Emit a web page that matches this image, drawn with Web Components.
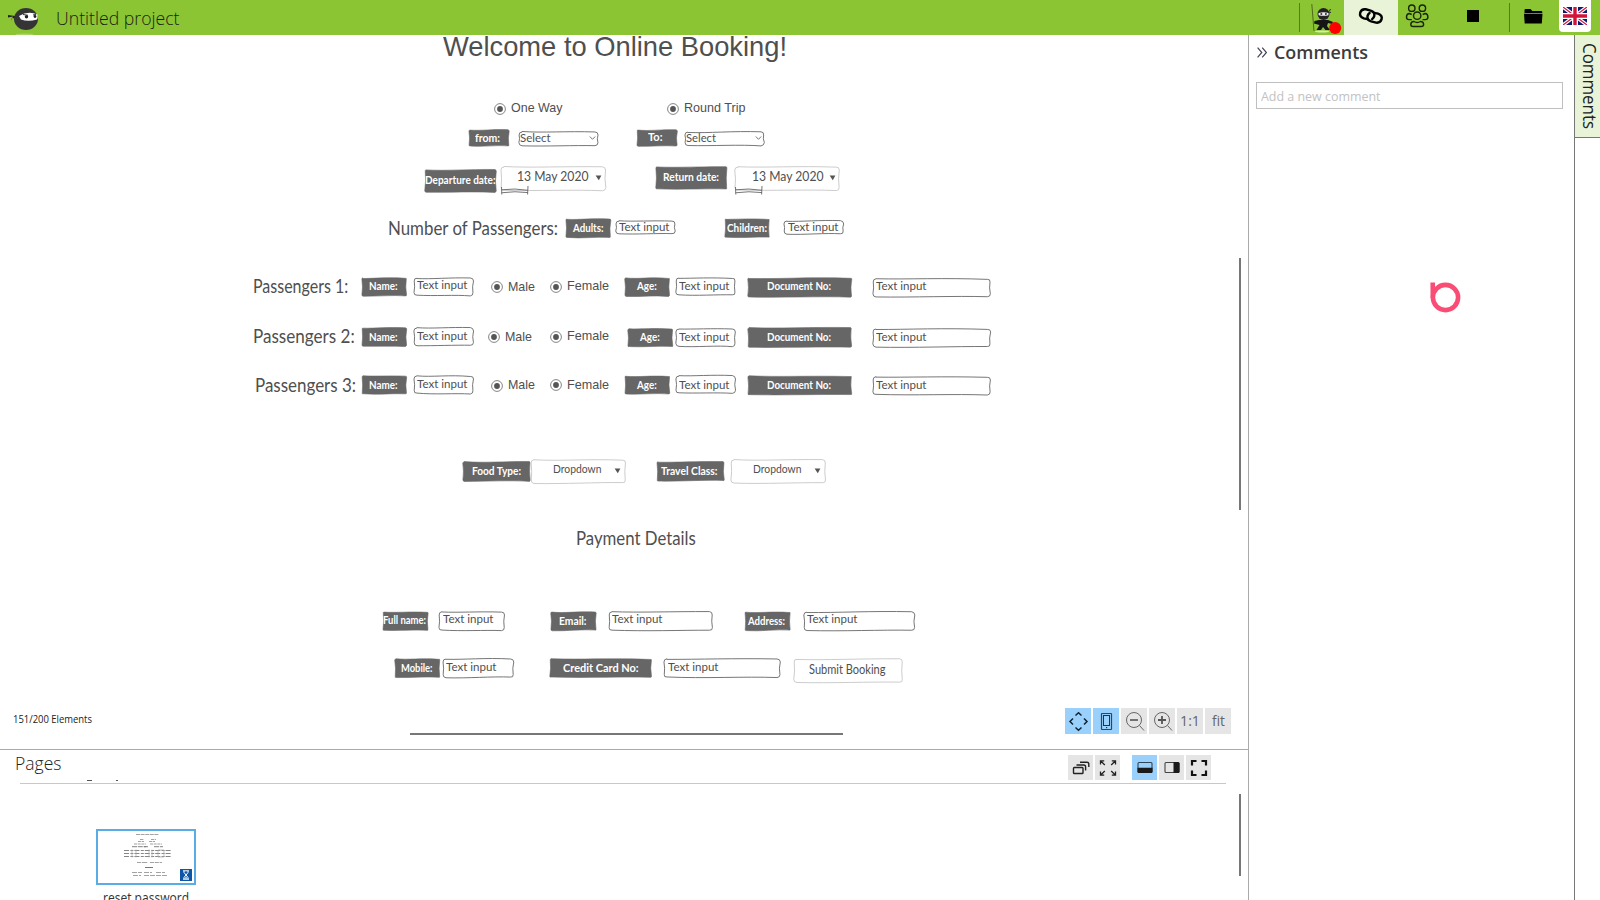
<!DOCTYPE html>
<html lang="en">
<head>
<meta charset="utf-8">
<title>Untitled project</title>
<style>
html,body{margin:0;height:100%;overflow:hidden;background:#fff}
body{font-family:"Open Sans","Noto Sans",sans-serif;color:#333}
</style>
</head>
<body>
<proto-app></proto-app>
<script>
function define(name, html, setup) {
  const t = document.createElement('template');
  t.innerHTML = html;
  customElements.define(name, class extends HTMLElement {
    connectedCallback() {
      if (this.shadowRoot) return;
      this.attachShadow({mode: 'open'}).append(t.content.cloneNode(true));
      if (setup) setup(this, this.shadowRoot);
    }
  });
}

/* One line of text stretched to an exact width; w is the target length. */
define('fit-text', `<style>
:host{display:block;white-space:nowrap;line-height:1.2}
span{display:inline-block;transform-origin:0 0}
:host([vertical]){writing-mode:vertical-rl}
</style><span><slot></slot></span>`, (el, root) => {
  const s = root.querySelector('span'), w = +el.getAttribute('w');
  const v = el.hasAttribute('vertical');
  const r = s.getBoundingClientRect(), len = v ? r.height : r.width;
  el.style[v ? 'height' : 'width'] = w + 'px';
  if (len) s.style.transform = (v ? 'scaleY(' : 'scaleX(') + w / len + ')';
});

/* Hand-drawn rectangle: kind = label | input | select | soft */
define('sketch-box', `<style>
:host{display:block;position:absolute}
svg{display:block;overflow:visible}
</style>`, (el, root) => {
  const w = +el.getAttribute('w'), h = +el.getAttribute('h'), kind = el.getAttribute('kind');
  let seed = Math.round(w * 7 + h * 13 + parseFloat(el.style.left) * 3 + parseFloat(el.style.top));
  const rnd = a => { seed = (seed * 1103515245 + 12345) & 0x7fffffff; return (seed / 0x7fffffff - .5) * a; };
  const a = 1.1, r = kind === 'label' ? 1 : 3;
  const d = `M${r} ${rnd(a)} C${w*.3} ${rnd(a)+.8} ${w*.6} ${rnd(a)-.9} ${w-r} ${rnd(a)}` +
    ` Q${w} 0 ${w+rnd(.8)} ${r} Q${w-1.3} ${h*.5} ${w+rnd(.8)} ${h-r} Q${w} ${h} ${w-r} ${h+rnd(a)}` +
    ` C${w*.7} ${h+rnd(a)-.8} ${w*.35} ${h+rnd(a)+.8} ${r} ${h+rnd(a)} Q0 ${h} ${rnd(.6)} ${h-r}` +
    ` Q${1.1} ${h*.5} ${rnd(.6)} ${r} Q0 0 ${r} ${rnd(.6)}Z`;
  const fill = kind === 'label' ? '#666' : '#fff';
  const stroke = kind === 'soft' ? '#c6c6c6' : '#666';
  root.innerHTML += `<svg width="${w}" height="${h}"><path d="${d}" fill="${fill}" stroke="${stroke}" stroke-width="${kind === 'label' ? .6 : .9}"/></svg>`;
});

define('radio-dot', `<style>
:host{display:block;position:absolute;width:12px;height:12px}svg{display:block}
</style><svg width="12" height="12"><circle cx="6" cy="6" r="5.4" fill="#fff" stroke="#777" stroke-width=".9"/><circle cx="6" cy="6" r="2.9" fill="#555"/></svg>`);

define('caret-mark', `<style>
:host{display:block;position:absolute;width:7px;height:6px}svg{display:block;overflow:visible}
.c{display:none}:host([open-line]) .c{display:block}:host([open-line]) .t{display:none}
</style><svg width="7" height="6"><path class="t" d="M.6 .5H6.4L3.8 5.2Z" fill="#555"/><path class="c" d="M.8 1.5L3.5 4.3L6.2 1.5" fill="none" stroke="#777"/></svg>`);

/* Free canvas of the prototype: the origin is the canvas corner. */
define('design-canvas', `<style>
:host{display:block;position:relative;overflow:hidden;background:#fff;color:#4f4f4f;flex:1}
fit-text{position:absolute}
.a{font-family:"Liberation Sans",Arial,sans-serif}
.h{font-family:Lato,sans-serif}
.l{font-family:Lato,sans-serif;font-weight:700;color:#fff}
.count{position:absolute;left:12.5px;top:677px;font-size:10px;line-height:14px;color:#222}
.v,.hz{position:absolute;background:#777}
.v{left:1239px;top:223px;width:2px;height:252px}
.hz{left:410px;top:698px;width:433px;height:2px}
.tools{position:absolute;left:1065px;top:673px;display:flex;gap:2px}
.tools fit-text{position:static}
svg.pick{position:absolute;overflow:visible}
</style><div id="items"></div>
<div class="v"></div><div class="hz"></div>
<fit-text class="count" w="79">151/200 Elements</fit-text>
<div class="tools">
<tool-button on icon="move"></tool-button><tool-button on icon="device"></tool-button><tool-button icon="minus"></tool-button><tool-button icon="plus"></tool-button><tool-button><fit-text w="20">1:1</fit-text></tool-button><tool-button><fit-text w="13">fit</fit-text></tool-button>
</div>`, (el, root) => {
  const T = 35, out = [];
  const ASC = {a: .9465, h: .94, l: .94};
  const DX = .6;
  const text = (c, s, x, x2, b, t) => out.push(`<fit-text class="${c}" w="${x2 - x}" style="font-size:${s}px;left:${x - DX}px;top:${(b - T - ASC[c] * s).toFixed(2)}px">${t}</fit-text>`);
  const box = (k, x, x2, y, y2) => out.push(`<sketch-box kind="${k}" w="${x2 - x}" h="${y2 - y}" style="left:${x - DX + .1}px;top:${y - T}px"></sketch-box>`);
  const label = (x, x2, y, y2, t1, t2, b, t) => { box('label', x, x2, y, y2); text('l', 11, t1, t2, b, t); };
  const input = (x, x2, y, y2, t1, b) => { box('input', x, x2, y, y2); text('h', 12, t1, t1 + 50.5, b, 'Text input'); };
  const radio = (cx, cy, t1, t2, b, t) => { out.push(`<radio-dot style="left:${cx - 6.2}px;top:${cy - 6.2 - T}px"></radio-dot>`); text('a', 13, t1, t2, b, t); };
  const caret = (x, y, open) => out.push(`<caret-mark ${open ? 'open-line' : ''} style="left:${x - 3.5}px;top:${y - 3 - T}px"></caret-mark>`);

  text('a', 28, 444, 788, 56, 'Welcome to Online Booking!');
  radio(500.5, 108.7, 512, 563.5, 112, 'One Way');
  radio(673, 108.7, 684.8, 746.3, 112, 'Round Trip');
  label(469.5, 509.5, 129.5, 145.5, 476, 501, 141, 'from:');
  box('input', 519.5, 598.5, 131.5, 145); text('h', 11.5, 520.5, 551, 141.5, 'Select'); caret(592.5, 138, 1);
  label(637, 677, 129.5, 145.5, 649, 663.5, 140.5, 'To:');
  box('input', 685.5, 764.5, 131.5, 145); text('h', 11.5, 686.5, 716.5, 141.5, 'Select'); caret(758, 138, 1);
  label(425, 496, 170, 192, 426, 496.5, 183, 'Departure date:');
  label(656.5, 727.5, 167, 189, 664, 720, 180, 'Return date:');
  [[501.5, 606], [735.8, 840.1]].forEach(([x, x2]) => {
    box('soft', x, x2, 166.5, 190);
    text('h', 14, x + 16.5, x + 88, 181, '13 May 2020');
    caret(x + 96.5, 178);
    out.push(`<svg class="pick" width="28" height="10" style="left:${x - .5}px;top:${186 - T}px"><path d="M.5 1L.8 8.5M.5 3.8Q14 2 27 4.3M.5 6.8Q14 4.8 27 6.6M27 0L26.6 8.5" fill="none" stroke="#666" stroke-width=".9"/></svg>`);
  });
  text('h', 19.5, 389, 559, 234, 'Number of Passengers:');
  label(566.5, 611, 218.5, 237, 573.5, 604, 231, 'Adults:');
  input(616.5, 675.5, 220.5, 233.5, 619.5, 231);
  label(725, 769.5, 218.5, 237, 727.5, 767.5, 231.5, 'Children:');
  input(784.5, 844, 220.5, 233.5, 788.5, 231);
  const rows = [
    [253.3, 348.5, 292, 277.5, 289, 0, 0, 0], [253.3, 355, 342.5, 328, 340, -3.2, 3, 0], [255.5, 356.5, 391.5, 375.5, 388, 0, 0, .5]];
  const radioY = [[287.3, 291, 286.7, 290.3], [337.3, 341, 336.7, 340.3], [385.7, 389.3, 385.2, 389]];
  rows.forEach(([a, b, bl, y, tb, dm, da], i) => {
    text('h', 19.5, a, b, bl, `Passengers ${i + 1}:`);
    label(362, 406.4, y, y + 18, 370, 398.5, tb, 'Name:');
    input(414.5, 473.8, y, y + 17.5, 418, tb);
    const q = radioY[i];
    radio(497.6 + dm, q[0], 508.8 + dm, 535.8 + dm, q[1], 'Male');
    radio(556, q[2], 567.3, 609.3, q[3], 'Female');
    label(625.3 + da, 669.8 + da, y + .8, y + 18.8, 637.8 + da, 657.5 + da, tb + .8, 'Age:');
    input(676, 735.3, y + .8, y + 18, 680, tb + .8);
    label(748.5, 852, y + .3, y + 19.3, 768, 832, tb + .8, 'Document No:');
    input(873, 990.3, y + 1, y + 18.8, 877, tb + 1);
  });
  label(463.5, 530.8, 462, 481, 472.3, 521.3, 474, 'Food Type:');
  box('soft', 531, 625.6, 460, 483); text('h', 12, 553.3, 601.8, 473.3, 'Dropdown'); caret(617.5, 471);
  label(657, 724, 462, 481, 662, 718.5, 474.3, 'Travel Class:');
  box('soft', 731, 825.5, 460, 483); text('h', 12, 753.3, 801.8, 473.3, 'Dropdown'); caret(817.5, 471);
  text('h', 19.5, 576.5, 696.3, 544.8, 'Payment Details');
  label(383, 428, 611.5, 630, 384, 427, 623.5, 'Full name:');
  input(439.5, 505, 611.5, 630, 443.5, 623.5);
  label(551, 596, 611.5, 630, 559.5, 587, 624, 'Email:');
  input(609, 712.5, 611.5, 630, 613, 623.5);
  label(745, 790.3, 611.5, 630, 749, 786, 624, 'Address:');
  input(804, 914.5, 611.5, 630, 808, 623.5);
  label(395.5, 440.3, 658.5, 677, 402, 433.5, 671.3, 'Mobile:');
  input(443.5, 514, 658.5, 677, 447, 671.3);
  label(550.5, 651.8, 658.5, 677, 563.3, 639, 671.3, 'Credit Card No:');
  input(664.5, 780.5, 658.5, 677, 668.5, 671.3);
  box('soft', 794, 902.5, 658.5, 682); text('h', 12.5, 809.5, 886, 673.5, 'Submit Booking');
  root.getElementById('items').innerHTML = out.join('');
});

const ICONS = {
  move: '<path d="M10.5 7.5L13.5 4.8L16.5 7.5M10.5 19.5L13.5 22.2L16.5 19.5M8 10.5L5 13.5L8 16.5M19 10.5L22 13.5L19 16.5" fill="none" stroke="#123" stroke-width="1.5"/>',
  device: '<rect x="8.5" y="5.5" width="10" height="16" rx=".5" fill="none" stroke="#345" stroke-width="1.2"/><rect x="10.5" y="7.5" width="6" height="10" fill="none" stroke="#234"/><rect x="13" y="19" width="1.2" height="1.2" fill="#234"/>',
  minus: '<circle cx="13" cy="12" r="7.5" fill="none" stroke="#666"/><path d="M18.5 17.5L23 22.5" stroke="#666"/><path d="M9 12H17" stroke="#555" stroke-width="1.6"/>',
  plus: '<circle cx="13" cy="12" r="7.5" fill="none" stroke="#666"/><path d="M18.5 17.5L23 22.5" stroke="#666"/><path d="M9 12H17M13 8V16" stroke="#555" stroke-width="1.8"/>',
  stack: '<g fill="none" stroke="#222" stroke-width="1.4"><rect x="5.5" y="12.5" width="9.5" height="6" rx=".8"/><path d="M8.5 10H15.8Q17.6 10 17.6 11.8V15.5M12 7.2H19Q20.8 7.2 20.8 9V12"/></g>',
  expand: '<g fill="none" stroke="#222" stroke-width="1.3"><path d="M5.5 9.5V5.8H9.2M6 6.2L9.8 10M16.8 5.8H20.5V9.5M20 6.2L16.2 10M5.5 16.5V20.2H9.2M6 19.8L9.8 16M20.5 16.5V20.2H16.8M20 19.8L16.2 16"/></g>',
  bottom: '<rect x="6" y="7.5" width="14" height="10" rx="1" fill="none" stroke="#345" stroke-width="1.1"/><path d="M5.5 12.8H20.5V16.5Q20.5 18 19 18H7Q5.5 18 5.5 16.5Z" fill="#1a1a1a"/>',
  side: '<rect x="6" y="7.5" width="14" height="10" rx="1" fill="none" stroke="#444" stroke-width="1.1"/><path d="M14.5 7H19Q20.5 7 20.5 8.5V16.5Q20.5 18 19 18H14.5Z" fill="#1a1a1a"/>',
  full: '<path d="M6 10.5V6H10.5M15.5 6H20V10.5M6 15.5V20H10.5M15.5 20H20V15.5" fill="none" stroke="#111" stroke-width="2.2"/>'
};
define('tool-button', `<style>
:host{display:flex;align-items:center;justify-content:center;width:var(--side,26px);height:var(--side,26px);background:#e5e5e5;font-size:14.5px;color:#666}
:host([on]){background:#99d1fc}
svg{display:block;width:100%;height:100%}
</style><slot></slot>`, (el, root) => {
  const i = el.getAttribute('icon');
  if (i) root.innerHTML += `<svg viewBox="${{move:1,device:1,minus:1,plus:1}[i] ? '0 0 26 26' : '0 0 25 25'}">${ICONS[i]}</svg>`;
});

define('page-thumb', `<style>
:host{display:flex;flex-direction:column;align-items:center;width:100px;flex:none}
.f{position:relative;box-sizing:border-box;width:100px;height:56px;border:2px solid #5aace4;background:#fff}
svg{display:block}
.b{position:absolute;right:2px;bottom:2px}
fit-text{font-size:14.5px;margin-top:4px;color:#333}
</style><div class="f"><svg width="96" height="52" fill="none" stroke="#999" stroke-width=".9">
<path d="M38 3.5H61" stroke-dasharray="4 .6"/>
<path d="M42 8.5H46M53 8.5H58M40 10.5H46M51 10.5H57M36 13H48M52 13H64M40 10.5" stroke-dasharray="3 .7"/>
<path d="M34 15.7H48M46 15.7H50M56 15.7H65" stroke-dasharray="5 .8" stroke="#777"/>
<path d="M26 19.5H74M26 22.5H74M26 25.5H74" stroke-dasharray="5 1.4 3 1" stroke="#777"/>
<path d="M34 18.5V26.5M38 18.5V26.5M51 18.5V26.5M54 18.5V26.5M60 19H66V26H60Z" stroke="#aaa" stroke-width=".7"/>
<path d="M39 31.5H45M45 31.5H50M52 31.5H64" stroke-dasharray="4 .8"/>
<path d="M47 36.5H55" stroke="#666"/>
<path d="M34 41.5H44M46 41.5H54M58 41.5H67M35 44.5H43M46 44.5H69" stroke-dasharray="5 1"/>
</svg><svg class="b" width="12" height="12"><rect width="12" height="12" fill="#0d55a5"/><path d="M3 1.8H9M3 10.2H9M4 2V3.5L8 8.5V10M8 2V3.5L4 8.5V10" fill="none" stroke="#fff"/><path d="M4.5 9.5L6 7.8L7.5 9.5Z" fill="#fff"/></svg></div><fit-text w="86"><slot></slot></fit-text>`);

define('pages-panel', `<style>
:host{display:flex;flex-direction:column;flex:none;box-sizing:border-box;height:151px;border-top:1px solid #aaa;overflow:hidden;position:relative}
header{display:flex;flex:none;justify-content:space-between;height:33px;margin:0 22px 0 20px;border-bottom:1px solid #c8c8c8;position:relative}
.t{font-size:17.5px;font-weight:300;margin:3px 0 0 -5px;color:#222}
.tools{display:flex;gap:2px;padding:5px 15px 0 0;--side:25px}
.gap{width:8px}
.cut{position:absolute;height:1px;top:30px;background:#555}
.body{display:flex;flex:none;padding:45px 0 0 96px}
.sb{position:absolute;left:1239px;top:44px;width:2px;height:82px;background:#777}
</style><header><fit-text class="t" w="46.5">Pages</fit-text><div class="tools"><tool-button icon="stack"></tool-button><tool-button icon="expand"></tool-button><div class="gap"></div><tool-button on icon="bottom"></tool-button><tool-button icon="side"></tool-button><tool-button icon="full"></tool-button></div><i class="cut" style="left:67px;width:5px"></i><i class="cut" style="left:96px;width:2px"></i></header>
<div class="body"><page-thumb>reset password</page-thumb></div><div class="sb"></div>`);

define('comments-panel', `<style>
:host{display:flex;flex-direction:column;box-sizing:border-box;width:326px;border-left:1px solid #aaa;padding:0 12px 0 7px}
.h{display:flex;align-items:center;height:35px;font-size:18px;font-weight:600;color:#3c3c3c}
.h svg{margin:0 7px 0 1px}
.i{box-sizing:border-box;width:307px;height:27px;border:1px solid #bfbfbf;margin-top:12px;padding:6px 0 0 4px;font-size:13px;line-height:1;color:#c2c2c2}
.s{margin:172.5px 0 0 174px;display:block}
</style><div class="h"><svg width="10" height="11" fill="none" stroke="#445" stroke-width="1.2"><path d="M.6 .6L4.8 5.5L.6 10.4M5.2 .6L9.4 5.5L5.2 10.4"/></svg><fit-text w="94">Comments</fit-text></div>
<div class="i"><fit-text w="119.5">Add a new comment</fit-text></div>
<svg class="s" width="31" height="31"><circle cx="15.5" cy="15.5" r="12.6" fill="none" stroke="#fa4d75" stroke-width="4.6"/><path d="M.4 .5H5V12L.6 16Z" fill="#fa4d75"/></svg>`);

define('side-tab', `<style>
:host{display:block;box-sizing:border-box;width:26px;border-left:1px solid #777}
.t{box-sizing:border-box;height:103px;background:#e8f3d7;border-bottom:1px solid #777;padding:8px 0 0 3px;font-size:18px;color:#222}
</style><div class="t"><fit-text vertical w="86">Comments</fit-text></div>`);

define('app-bar', `<style>
:host{display:flex;flex:none;height:35px;background:#8bc534;align-items:stretch}
.logo{margin:7px 0 0 8px}
.n{font-size:18px;font-weight:300;color:#1a1f10;margin:8px auto 0 17px}
.sep{width:1px;background:#58792a;margin:3px 0 3px}
.b{display:flex;justify-content:center}
.on{background:#e8f3d7}
.fl{width:32px;height:32px;background:#fff;border-radius:0 0 4px 4px;display:flex;justify-content:center;align-items:center}
svg{display:block}
</style>
<svg class="logo" width="31" height="28"><path d="M0 8L7 9L9 8V13L4 10.5L3 14L5 9.5L0 10.5Z" fill="#222"/><ellipse cx="16.5" cy="27.5" rx="9" ry="1" fill="#a9d468"/><ellipse cx="18" cy="12" rx="12" ry="11" fill="#353535"/><path d="M11 9Q20 3.5 29.5 7.5Q30 11 29 12.5Q20 15 13 12.5Z" fill="#fff"/><circle cx="18.5" cy="9.7" r="1.7" fill="#222"/><circle cx="27" cy="9.5" r="1.4" fill="#222"/><path d="M15 7.5L20 8.3M25 8L28 7.3" stroke="#333"/></svg>
<fit-text class="n" w="123.5">Untitled project</fit-text>
<div class="sep"></div>
<div class="b" style="width:44px"><svg width="44" height="35"><ellipse cx="22" cy="31.5" rx="7" ry="1" fill="#d5ecb0"/><path d="M11.8 4L14 31" stroke="#4e691c" stroke-width="1"/><circle cx="23.5" cy="14" r="6" fill="#222"/><path d="M18.5 13Q24 11.5 28.5 13V15.2Q24 16.3 18.5 15.2Z" fill="#eee"/><path d="M20.5 14H22.2M25 14H26.7" stroke="#111" stroke-width="1.4"/><path d="M19 20H28L33 22L32 24L28 23L27 26L30 30H25.5L23 27L21 30H16.5L19.5 25L14 23.5L14.5 21Z" fill="#151515"/><path d="M29 10.5L31 9.5M29 12L31 12.5" stroke="#222"/><circle cx="35.2" cy="28" r="6" fill="#f00"/></svg></div>
<div class="b on" style="width:54px"><svg width="54" height="35" fill="none" stroke="#000" stroke-width="2.4" stroke-linecap="round"><path d="M23.6 19.2L19.8 18.3Q15.2 16.6 16.2 12.7Q17.4 8.7 21.8 9.3L26.6 10.6Q31 12 30.3 15.9Q29.8 18 28.2 19"/><path d="M30.2 12.8L34 13.7Q38.6 15.3 37.6 19.2Q36.4 23.2 32 22.6L27.2 21.4Q22.8 20 23.5 16.1Q24 14 25.6 13"/></svg></div>
<div class="b" style="width:38px"><svg width="38" height="35" fill="none" stroke="#182508" stroke-width="1.4"><circle cx="13.8" cy="8.2" r="3.2"/><circle cx="24.4" cy="8.2" r="3.2"/><circle cx="19.2" cy="15.7" r="3.7"/><path d="M13.8 19.6H11Q8.5 19.6 8.5 17Q8.5 13.7 11.4 13.5L13.7 14.5M24.6 19.6H27.3Q29.9 19.6 29.9 17Q29.9 13.7 27 13.5L24.7 14.5M16 21.5Q12.8 21.5 12.8 24.5Q12.8 26.5 15 26.5H23.3Q25.6 26.5 25.6 24.5Q25.6 21.5 22.4 21.5Q19.2 23.5 16 21.5Z"/></svg></div>
<div class="b" style="width:73px"><svg width="73" height="35"><rect x="31" y="10" width="12" height="12"/></svg></div>
<div class="sep"></div>
<div class="b" style="width:49px"><svg width="49" height="35"><path d="M14.5 10.2Q14.5 9 15.7 9H20.5L22.3 11H31Q32.3 11 32.3 12.2V13H14.5ZM14 13.8H32.5L31.8 23.5H14.7Z"/></svg></div>
<div class="fl"><svg width="24" height="18" viewBox="0 0 24 18"><rect width="24" height="18" fill="#0b1b70"/><path d="M0 0L24 18M24 0L0 18" stroke="#fff" stroke-width="3.6"/><path d="M0 0L24 18M24 0L0 18" stroke="#d2143a" stroke-width="1.2"/><path d="M12 0V18M0 9H24" stroke="#fff" stroke-width="6"/><path d="M12 0V18M0 9H24" stroke="#d2143a" stroke-width="3.4"/></svg></div>
<div style="width:9px"></div>`);

define('proto-app', `<style>
:host{display:flex;flex-direction:column;width:1600px;height:900px;overflow:hidden}
main{display:flex;flex:1;min-height:0}
.work{display:flex;flex-direction:column;width:1248px}
</style><app-bar></app-bar><main><div class="work"><design-canvas></design-canvas><pages-panel></pages-panel></div><comments-panel></comments-panel><side-tab></side-tab></main>`);
</script>
</body>
</html>
